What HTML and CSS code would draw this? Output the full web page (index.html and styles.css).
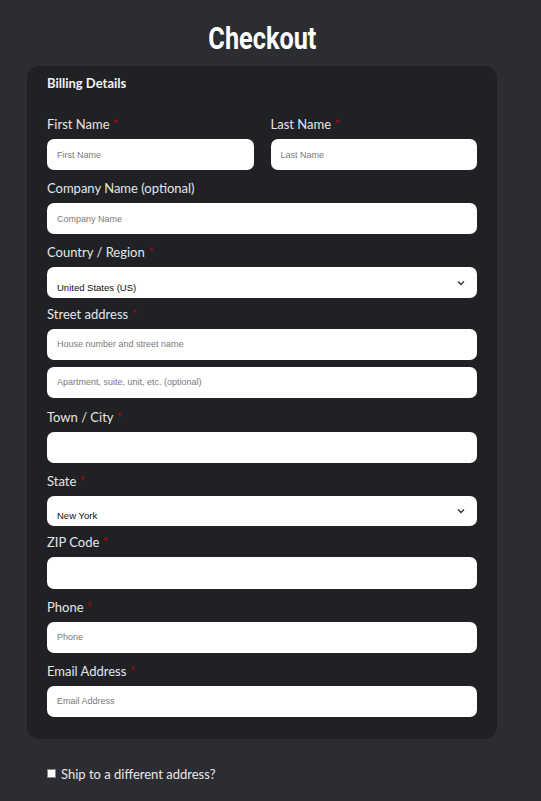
FILE: index.html
```html
<!DOCTYPE html>
<html>
  <head>
    <meta charset="utf-8">
    <meta name="viewport" content="width=device-width, initial-scale=1">
    <title>Checkout</title>
    <link rel="stylesheet" href="styles.css">
  </head>
  <body>
    <main class="checkout">
      <h1><span>Checkout</span></h1>

      <form class="billing">
        <h3>Billing Details</h3>

        <div class="row_two">
          <div class="field">
            <label for="first_name">First Name <abbr>*</abbr></label>
            <input type="text" id="first_name" placeholder="First Name">
          </div>
          <div class="field">
            <label for="last_name">Last Name <abbr>*</abbr></label>
            <input type="text" id="last_name" placeholder="Last Name">
          </div>
        </div>

        <div class="field">
          <label for="company">Company Name (optional)</label>
          <input type="text" id="company" placeholder="Company Name">
        </div>

        <div class="field select_field">
          <label for="country">Country / Region <abbr>*</abbr></label>
          <div class="select">
            <span>United States (US)</span>
            <svg width="8" height="6" viewBox="0 0 8 6"><path d="M1 1.5 L4 4.5 L7 1.5" fill="none" stroke="#333" stroke-width="1.4"/></svg>
          </div>
        </div>

        <div class="field street">
          <label for="street">Street address <abbr>*</abbr></label>
          <input type="text" id="street" placeholder="House number and street name">
          <input type="text" placeholder="Apartment, suite, unit, etc. (optional)">
        </div>

        <div class="field">
          <label for="city">Town / City <abbr>*</abbr></label>
          <input type="text" id="city">
        </div>

        <div class="field select_field">
          <label for="state">State <abbr>*</abbr></label>
          <div class="select">
            <span>New York</span>
            <svg width="8" height="6" viewBox="0 0 8 6"><path d="M1 1.5 L4 4.5 L7 1.5" fill="none" stroke="#333" stroke-width="1.4"/></svg>
          </div>
        </div>

        <div class="field">
          <label for="zip">ZIP Code <abbr>*</abbr></label>
          <input type="text" id="zip">
        </div>

        <div class="field">
          <label for="phone">Phone <abbr>*</abbr></label>
          <input type="text" id="phone" placeholder="Phone">
        </div>

        <div class="field last">
          <label for="email">Email Address <abbr>*</abbr></label>
          <input type="text" id="email" placeholder="Email Address">
        </div>
      </form>

      <label class="ship"><span class="box"></span>Ship to a different address?</label>
    </main>
  </body>
</html>
```

FILE: styles.css
```css
body {
  margin: 0;
  background-color: #2c2d32;
  font-family: "Lato", "Open Sans", sans-serif;
  color: #e4e6ea;
}

.checkout {
  width: 470px;
  margin-left: 27px;
  padding-top: 18px;
}

h1 {
  margin: 0 0 7px;
  text-align: center;
  font-family: "Roboto", sans-serif;
  font-weight: bold;
  font-size: 32px;
  line-height: 41px;
  color: #ffffff;
}

/* condensed look for the title */
h1 span {
  display: inline-block;
  transform: scaleX(0.79);
}

.billing {
  background-color: #202125;
  border-radius: 12px;
  padding: 8px 20px 22px;
}

h3 {
  margin: 0 0 23px;
  font-size: 13px;
  font-weight: bold;
  line-height: 18px;
  color: #f2f2f2;
}

.row_two {
  display: grid;
  grid-template-columns: 1fr 1fr;
  gap: 17px;
}

.field {
  display: flex;
  flex-direction: column;
  margin-bottom: 9px;
}

.field label {
  font-size: 13px;
  line-height: 18px;
  margin-bottom: 6px;
}

abbr {
  color: #b00000;
  text-decoration: none;
}

input {
  box-sizing: border-box;
  height: 31.2px;
  border: none;
  border-radius: 7px;
  background: #ffffff;
  padding: 0 10px;
  font-family: "Liberation Sans", Arial, sans-serif;
  font-size: 9px;
  outline: none;
}

input::placeholder {
  color: #7a7a7a;
}

.street input + input {
  margin-top: 7px;
}

.street {
  margin-bottom: 10px;
}

.select_field {
  margin-bottom: 7px;
}

.select {
  box-sizing: border-box;
  height: 30.2px;
  border-radius: 7px;
  background: #ffffff;
  padding: 0 12px 0 10px;
  display: flex;
  align-items: flex-end;
  justify-content: space-between;
  font-family: "Liberation Sans", Arial, sans-serif;
  font-size: 9.5px;
  color: #111;
}

.select span {
  padding-bottom: 5px;
}

.select svg {
  margin-bottom: 12px;
}

.last {
  margin-bottom: 0;
}

.ship {
  display: flex;
  align-items: center;
  gap: 5px;
  margin: 27px 0 0 20px;
  font-size: 13px;
  color: #e8e8e8;
}

.box {
  width: 7px;
  height: 7px;
  background: #ffffff;
  border: 1px solid #888;
}
```
